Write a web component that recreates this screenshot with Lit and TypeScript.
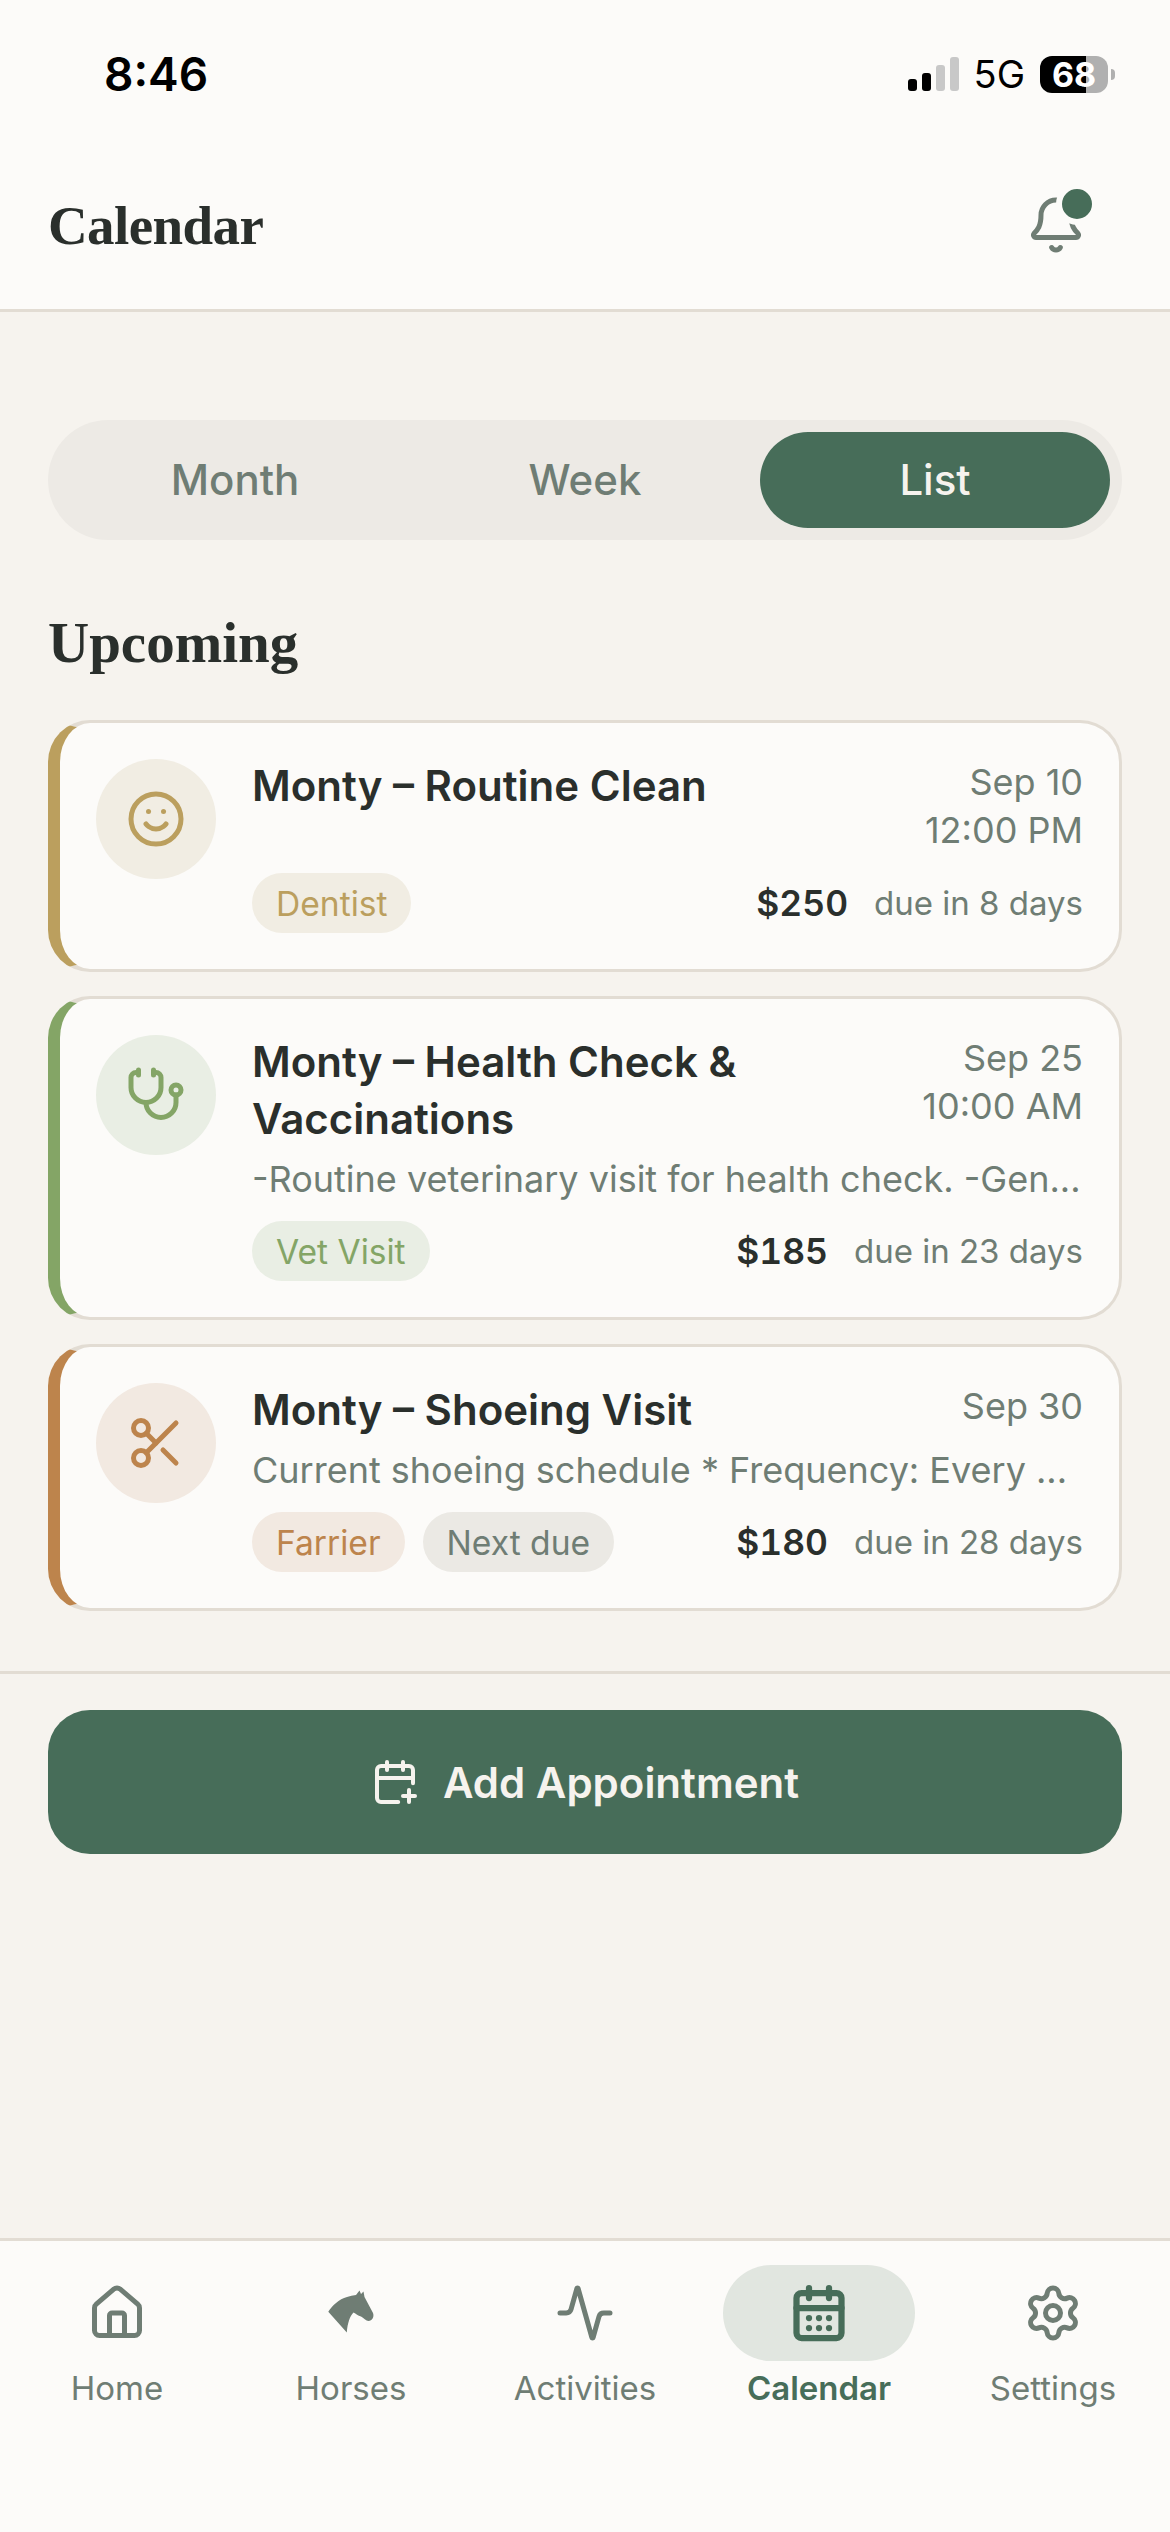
import { LitElement, css, html, svg } from 'lit'
import { customElement } from 'lit/decorators.js'

const icon = (body: unknown, cls = '') => html`<svg class="icon ${cls}" viewBox="0 0 24 24" fill="none" stroke="currentColor" stroke-width="2" stroke-linecap="round" stroke-linejoin="round">${body}</svg>`

const smile = svg`<circle cx="12" cy="12" r="10"/><path d="M8 14s1.5 2 4 2 4-2 4-2"/><path d="M9 9h.01"/><path d="M15 9h.01"/>`
const stethoscope = svg`<path d="M11 2v2"/><path d="M5 2v2"/><path d="M5 3H4a2 2 0 0 0-2 2v4a6 6 0 0 0 12 0V5a2 2 0 0 0-2-2h-1"/><path d="M8 15a6 6 0 0 0 12 0v-3"/><circle cx="20" cy="10" r="2"/>`
const scissors = svg`<circle cx="6" cy="6" r="3"/><path d="M8.12 8.12 12 12"/><path d="M20 4 8.12 15.88"/><circle cx="6" cy="18" r="3"/><path d="M14.8 14.8 20 20"/>`
const bell = svg`<path d="M10.268 21a2 2 0 0 0 3.464 0"/><path d="M3.262 15.326A1 1 0 0 0 4 17h16a1 1 0 0 0 .74-1.673C19.41 13.956 18 12.499 18 8A6 6 0 0 0 6 8c0 4.499-1.411 5.956-2.738 7.326"/>`
const calendarPlus = svg`<path d="M16 19h6"/><path d="M16 2v4"/><path d="M19 16v6"/><path d="M21 12.598V6a2 2 0 0 0-2-2H5a2 2 0 0 0-2 2v14a2 2 0 0 0 2 2h8.598"/><path d="M3 10h18"/><path d="M8 2v4"/>`
const house = svg`<path d="M15 21v-8a1 1 0 0 0-1-1h-4a1 1 0 0 0-1 1v8"/><path d="M3 10a2 2 0 0 1 .709-1.528l7-5.999a2 2 0 0 1 2.582 0l7 5.999A2 2 0 0 1 21 10v9a2 2 0 0 1-2 2H5a2 2 0 0 1-2-2z"/>`
const activity = svg`<path d="M22 12h-2.48a2 2 0 0 0-1.93 1.46l-2.35 8.36a.25.25 0 0 1-.48 0L9.24 2.18a.25.25 0 0 0-.48 0l-2.35 8.36A2 2 0 0 1 4.49 12H2"/>`
const calendarDays = svg`<path d="M8 2v4"/><path d="M16 2v4"/><rect width="18" height="18" x="3" y="4" rx="2"/><path d="M3 10h18"/><path d="M8 14h.01"/><path d="M12 14h.01"/><path d="M16 14h.01"/><path d="M8 18h.01"/><path d="M12 18h.01"/><path d="M16 18h.01"/>`
const gear = svg`<path d="M9.671 4.136a2.34 2.34 0 0 1 4.659 0 2.34 2.34 0 0 0 3.319 1.915 2.34 2.34 0 0 1 2.33 4.033 2.34 2.34 0 0 0 0 3.831 2.34 2.34 0 0 1-2.33 4.033 2.34 2.34 0 0 0-3.319 1.915 2.34 2.34 0 0 1-4.659 0 2.34 2.34 0 0 0-3.32-1.915 2.34 2.34 0 0 1-2.33-4.033 2.34 2.34 0 0 0 0-3.831A2.34 2.34 0 0 1 6.35 6.051a2.34 2.34 0 0 0 3.319-1.915"/><circle cx="12" cy="12" r="3"/>`

const horse = html`<svg class="icon" viewBox="11 3 60 60" fill="currentColor"><path d="M18.3 31.7C22 26 29 19 37 17c3-1 6-1.500 9-2l3.500-4.500L51 14l2.500-2.500 1 5.500L63 33c1.500 4-1 8-4.500 8-2.500 0-5-3-7.500-4.500-3-1-5-2.500-7.500-4-3.500 3.500-6 10.500-6.700 20z"/></svg>`

interface Appointment {
  tone: string
  glyph: unknown
  title: string
  date: string
  time?: string
  desc?: string
  tags: [string, string][]
  amount: string
  due: string
}

const appointments: Appointment[] = [
  { tone: 'gold', glyph: smile, title: 'Monty – Routine Clean', date: 'Sep 10', time: '12:00 PM', tags: [['Dentist', 'gold']], amount: '$250', due: 'due in 8 days' },
  { tone: 'green', glyph: stethoscope, title: 'Monty – Health Check & Vaccinations', date: 'Sep 25', time: '10:00 AM', desc: '-Routine veterinary visit for health check. -Gen...', tags: [['Vet Visit', 'green']], amount: '$185', due: 'due in 23 days' },
  { tone: 'copper', glyph: scissors, title: 'Monty – Shoeing Visit', date: 'Sep 30', desc: 'Current shoeing schedule * Frequency: Every ...', tags: [['Farrier', 'copper'], ['Next due', 'plain']], amount: '$180', due: 'due in 28 days' },
]

const tabs = [
  { label: 'Home', glyph: icon(house) },
  { label: 'Horses', glyph: horse },
  { label: 'Activities', glyph: icon(activity) },
  { label: 'Calendar', glyph: icon(calendarDays, 'heavy'), active: true },
  { label: 'Settings', glyph: icon(gear) },
]

@customElement('app-root')
export class AppRoot extends LitElement {
  static override styles = css`
    :host {
      --paper: #fcfbf9;
      --page: #f6f3ee;
      --line: #e2dcd3;
      --ink: #2a2f2c;
      --muted: #6f7d74;
      --pine: #476d59;
      display: flex;
      flex-direction: column;
      min-height: 2532px;
      background: var(--page);
      color: var(--ink);
      font-family: Inter, 'Noto Sans', sans-serif;
    }

    * {
      box-sizing: border-box;
    }

    .icon {
      display: block;
      width: 60px;
      height: 60px;
      flex: none;
    }

    .icon.heavy {
      stroke-width: 2.5;
    }

    .top {
      background: var(--paper);
      border-bottom: 3px solid var(--line);
    }

    .status {
      height: 141px;
      padding: 7px 55px 0 104px;
      display: flex;
      align-items: center;
      color: #000;
    }

    .clock {
      font-size: 46px;
      font-weight: 600;
      flex: 1;
    }

    .signal {
      display: flex;
      align-items: flex-end;
      gap: 5px;
      height: 34px;
      margin-right: 15px;
    }

    .signal i {
      width: 9px;
      border-radius: 3px;
      background: #c8c8c8;
    }

    .signal i.on {
      background: #000;
    }

    .net {
      font-size: 38px;
      font-weight: 400;
      margin-right: 15px;
    }

    .battery {
      width: 68px;
      height: 37px;
      border-radius: 12px;
      background: linear-gradient(90deg, #000 68%, #b0b0b0 68%);
      color: #fff;
      font-size: 34px;
      font-weight: 700;
      line-height: 37px;
      text-align: center;
    }

    .nub {
      width: 4px;
      height: 11px;
      margin-left: 3px;
      border-radius: 0 4px 4px 0;
      background: #b0b0b0;
    }

    .bar {
      height: 168px;
      padding: 0 84px 0 48px;
      display: flex;
      align-items: center;
      justify-content: space-between;
    }

    .screen-title {
      font-family: 'Liberation Serif', serif;
      font-size: 55px;
      font-weight: 700;
      letter-spacing: -0.6px;
    }

    .bell {
      position: relative;
      color: var(--muted);
    }

    .dot {
      position: absolute;
      top: -12px;
      right: -12px;
      width: 42px;
      height: 42px;
      border-radius: 50%;
      background: var(--pine);
      border: 6px solid var(--paper);
    }

    main {
      flex: 1;
      display: flex;
      flex-direction: column;
    }

    .content {
      padding: 108px 48px 60px;
    }

    .segment {
      display: grid;
      grid-template-columns: repeat(3, 1fr);
      height: 120px;
      padding: 12px;
      border-radius: 60px;
      background: #edeae5;
    }

    .segment div {
      display: flex;
      align-items: center;
      justify-content: center;
      padding-bottom: 2px;
      border-radius: 48px;
      font-size: 42px;
      font-weight: 500;
      color: var(--muted);
    }

    .segment .on {
      background: var(--pine);
      color: var(--page);
    }

    h2 {
      margin: 67px 0 41px;
      font-family: 'Liberation Serif', serif;
      font-size: 57px;
      line-height: 72px;
      font-weight: 700;
    }

    .cards {
      display: flex;
      flex-direction: column;
      gap: 24px;
    }

    .card {
      display: flex;
      gap: 36px;
      padding: 36px;
      border: 3px solid var(--line);
      border-left: 12px solid var(--accent);
      border-radius: 42px;
      background: var(--paper);
    }

    .gold { --accent: #bb9f5e; --wash: #f1ede3; }
    .green { --accent: #84a566; --wash: #e9eee4; }
    .copper { --accent: #bd844c; --wash: #f2e9e1; }
    .plain { --accent: var(--muted); --wash: #ebe9e4; }

    .badge {
      width: 120px;
      height: 120px;
      flex: none;
      display: flex;
      align-items: center;
      justify-content: center;
      border-radius: 50%;
      background: var(--wash);
      color: var(--accent);
    }

    .body {
      flex: 1;
      min-width: 0;
      display: flex;
      flex-direction: column;
    }

    .head {
      display: flex;
      justify-content: space-between;
      gap: 24px;
    }

    .title {
      padding-bottom: 2px;
      margin-top: -2px;
      font-size: 42px;
      line-height: 57px;
      font-weight: 600;
    }

    .when {
      flex: none;
      margin-top: -1px;
      padding-bottom: 1px;
      text-align: right;
      font-size: 36px;
      line-height: 48px;
      color: var(--muted);
    }

    .desc {
      margin-top: 6px;
      font-size: 36px;
      line-height: 48px;
      white-space: nowrap;
      color: var(--muted);
    }

    .foot {
      margin-top: 18px;
      display: flex;
      align-items: center;
      gap: 18px;
    }

    .tag {
      height: 60px;
      padding: 0 24px;
      display: flex;
      align-items: center;
      border-radius: 30px;
      font-size: 33.6px;
      background: var(--wash);
      color: var(--accent);
    }

    .money {
      margin-left: auto;
      display: flex;
      align-items: center;
      gap: 26px;
    }

    .amount {
      font-size: 35.4px;
      font-weight: 600;
      font-variant-numeric: tabular-nums;
    }

    .due {
      font-size: 33px;
      color: var(--muted);
    }

    .action {
      border-top: 3px solid var(--line);
      padding: 36px 48px;
    }

    .add {
      height: 144px;
      display: flex;
      align-items: center;
      justify-content: center;
      gap: 24px;
      border-radius: 42px;
      background: var(--pine);
      color: var(--page);
      font-size: 42px;
      font-weight: 600;
    }

    .add .icon {
      width: 48px;
      height: 48px;
    }

    nav {
      height: 294px;
      padding-top: 24px;
      display: grid;
      grid-template-columns: repeat(5, 1fr);
      align-content: start;
      border-top: 3px solid var(--line);
      background: var(--paper);
    }

    .tab {
      display: flex;
      flex-direction: column;
      align-items: center;
      gap: 3px;
      font-size: 33px;
      line-height: 48px;
      color: var(--muted);
    }

    .tab-glyph {
      width: 192px;
      height: 96px;
      display: flex;
      align-items: center;
      justify-content: center;
      border-radius: 48px;
    }

    .tab.on {
      color: var(--pine);
      font-weight: 600;
    }

    .tab.on .tab-glyph {
      background: #e1e6e0;
    }
  `

  private renderCard(a: Appointment) {
    return html`
      <article class="card ${a.tone}">
        <div class="badge">${icon(a.glyph)}</div>
        <div class="body">
          <div class="head">
            <div class="title">${a.title}</div>
            <div class="when">${a.date}${a.time ? html`<br />${a.time}` : ''}</div>
          </div>
          ${a.desc ? html`<div class="desc">${a.desc}</div>` : ''}
          <div class="foot">
            ${a.tags.map(([label, tone]) => html`<span class="tag ${tone}">${label}</span>`)}
            <div class="money">
              <span class="amount">${a.amount}</span>
              <span class="due">${a.due}</span>
            </div>
          </div>
        </div>
      </article>
    `
  }

  override render() {
    return html`
      <header class="top">
        <div class="status">
          <span class="clock">8:46</span>
          <div class="signal">
            <i class="on" style="height:12px"></i>
            <i class="on" style="height:18px"></i>
            <i style="height:26px"></i>
            <i style="height:34px"></i>
          </div>
          <span class="net">5G</span>
          <div class="battery">68</div>
          <div class="nub"></div>
        </div>
        <div class="bar">
          <span class="screen-title">Calendar</span>
          <div class="bell">${icon(bell)}<span class="dot"></span></div>
        </div>
      </header>

      <main>
        <div class="content">
          <div class="segment">
            <div>Month</div>
            <div>Week</div>
            <div class="on">List</div>
          </div>
          <h2>Upcoming</h2>
          <div class="cards">${appointments.map((a) => this.renderCard(a))}</div>
        </div>
        <div class="action">
          <div class="add">${icon(calendarPlus)}<span>Add Appointment</span></div>
        </div>
      </main>

      <nav>
        ${tabs.map(
          (t) => html`
            <div class="tab ${t.active ? 'on' : ''}">
              <div class="tab-glyph">${t.glyph}</div>
              <span>${t.label}</span>
            </div>
          `,
        )}
      </nav>
    `
  }
}

declare global {
  interface HTMLElementTagNameMap {
    'app-root': AppRoot
  }
}
